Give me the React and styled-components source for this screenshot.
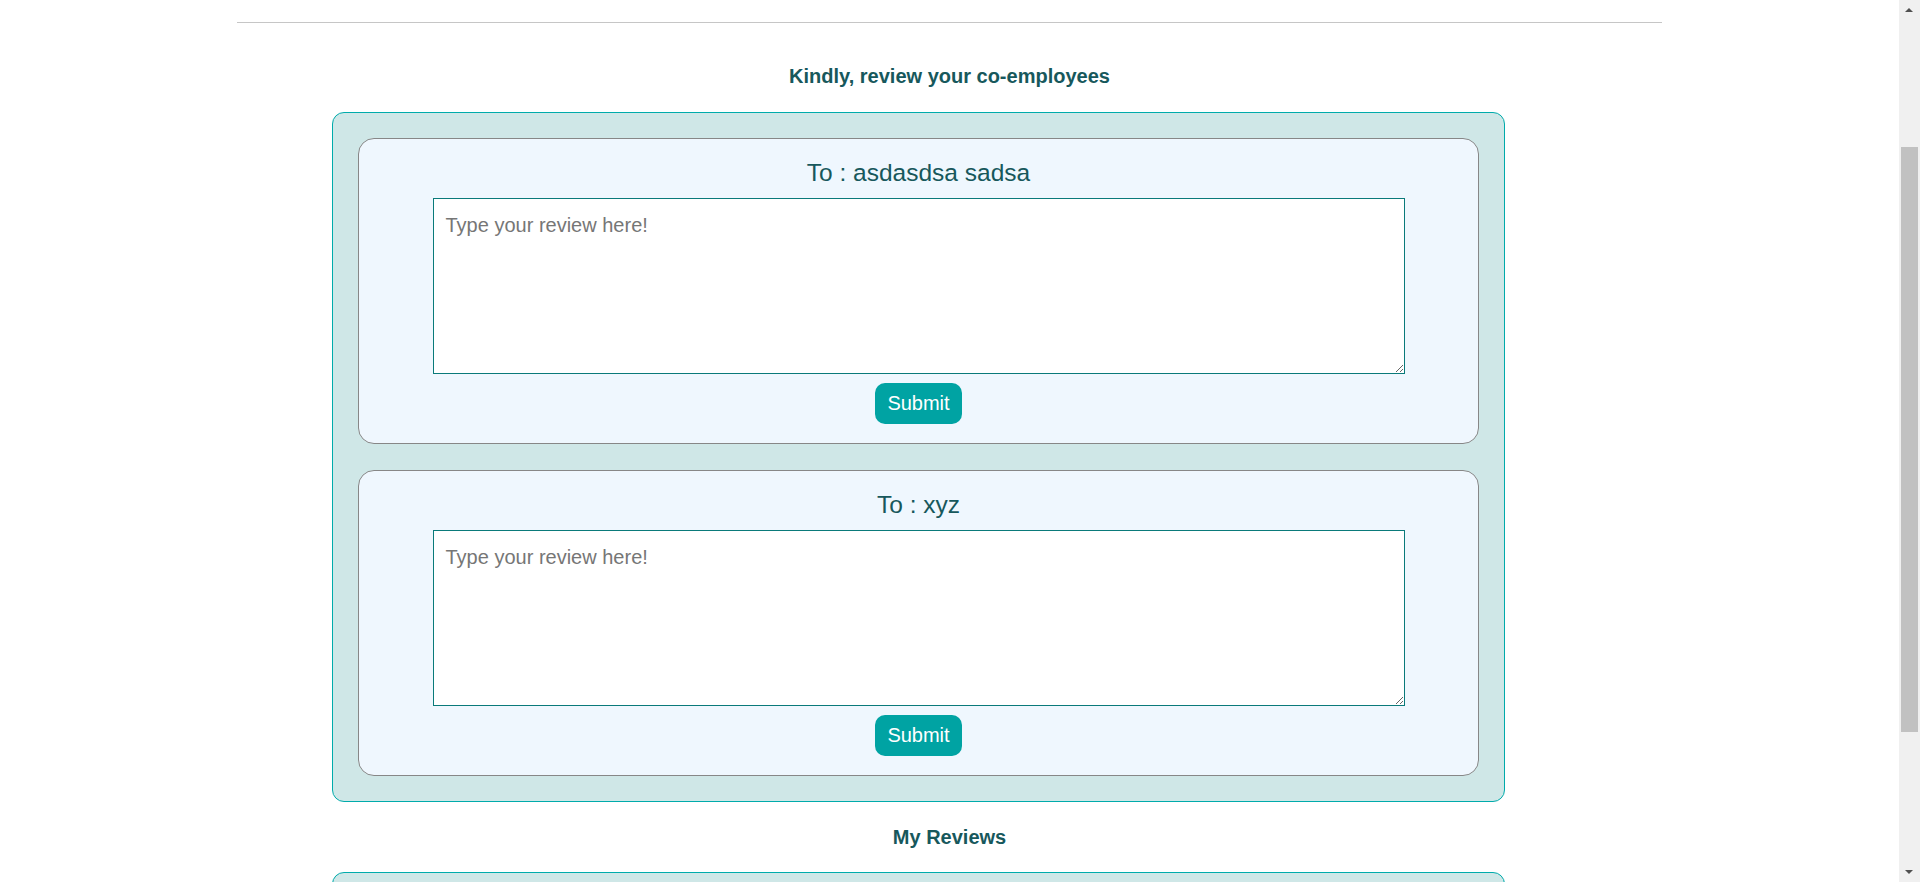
import React, { useState } from "react";
import styled, { createGlobalStyle } from "styled-components";

const tealDark = "#17585c";
const teal = "#00a3a3";

const GlobalStyle = createGlobalStyle`
    body {
        margin: 0;
        background: white;
        font-family: Arial, "Liberation Sans", Helvetica, sans-serif;
    }
`;

const Page = styled.div`
    width: calc(100% - 21px);
    padding-top: 22px;
    padding-bottom: 60px;
`;

const Divider = styled.div`
    width: 75%;
    height: 1px;
    margin: 0 auto;
    background-color: #c6c6c6;
`;

const SectionTitle = styled.h4`
    margin: ${(p) => p.$margin};
    text-align: center;
    font-size: 20px;
    line-height: 23px;
    font-weight: bold;
    color: ${tealDark};
`;

const Panel = styled.div`
    box-sizing: border-box;
    width: 1173px;
    margin-left: 332px;
    min-height: ${(p) => p.$minHeight || "auto"};
    padding: 25px;
    display: flex;
    flex-direction: column;
    gap: 26px;
    background-color: #cfe7e7;
    border: 1px solid #00abab;
    border-radius: 12px;
`;

const Card = styled.form`
    box-sizing: border-box;
    height: 306px;
    padding: 20px 0 19px;
    display: flex;
    flex-direction: column;
    align-items: center;
    background-color: #eff7fe;
    border: 1px solid #878787;
    border-radius: 16px;
`;

const Recipient = styled.h3`
    margin: 0 0 11px;
    text-align: center;
    font-size: 24.5px;
    line-height: 28px;
    font-weight: normal;
    color: ${tealDark};
`;

const ReviewInput = styled.textarea`
    box-sizing: border-box;
    width: 972px;
    height: 176px;
    margin: 0;
    padding: 15px 12px 12px;
    font-family: Arial, "Liberation Sans", Helvetica, sans-serif;
    font-size: 20px;
    line-height: 23px;
    color: #333;
    background: white;
    border: 1px solid #0a7a7a;
    border-radius: 0;
    outline: none;
    &::placeholder {
        color: #767676;
    }
`;

const SubmitButton = styled.button`
    margin-top: 9px;
    height: 41px;
    padding: 0 12px;
    font-family: Arial, "Liberation Sans", Helvetica, sans-serif;
    font-size: 20px;
    color: white;
    background-color: ${teal};
    border: none;
    border-radius: 10px;
    cursor: pointer;
    &:hover {
        background-color: #008f8f;
    }
`;

// window scrollbar as it shows in the capture
const ScrollTrack = styled.div`
    position: fixed;
    top: 0;
    right: 0;
    width: 21px;
    height: 100vh;
    background-color: #f0f0f0;
`;

const ScrollThumb = styled.div`
    position: absolute;
    left: 2px;
    right: 2px;
    top: 147px;
    height: 585px;
    background-color: #c1c1c1;
`;

const ScrollArrow = styled.div`
    position: absolute;
    left: 6px;
    width: 0;
    height: 0;
    border-left: 4.5px solid transparent;
    border-right: 4.5px solid transparent;
    ${(p) =>
        p.$down
            ? "bottom: 8px; border-top: 4px solid #505050;"
            : "top: 8px; border-bottom: 4px solid #505050;"}
`;

const employees = [
    { id: 1, name: "asdasdsa sadsa" },
    { id: 2, name: "xyz" },
];

function ReviewCard({ name }) {
    const [text, setText] = useState("");
    return (
        <Card onSubmit={(e) => e.preventDefault()}>
            <Recipient>To : {name}</Recipient>
            <ReviewInput
                value={text}
                onChange={(e) => setText(e.target.value)}
                placeholder="Type your review here!"
            />
            <SubmitButton type="submit">Submit</SubmitButton>
        </Card>
    );
}

export default function App() {
    return (
        <>
            <GlobalStyle />
            <Page>
                <Divider />
                <SectionTitle $margin="42px 0 24px">Kindly, review your co-employees</SectionTitle>
                <Panel>
                    {employees.map((emp) => (
                        <ReviewCard key={emp.id} name={emp.name} />
                    ))}
                </Panel>
                <SectionTitle $margin="24px 0 23px">My Reviews</SectionTitle>
                <Panel $minHeight="330px" />
            </Page>
            <ScrollTrack>
                <ScrollArrow />
                <ScrollThumb />
                <ScrollArrow $down />
            </ScrollTrack>
        </>
    );
}
